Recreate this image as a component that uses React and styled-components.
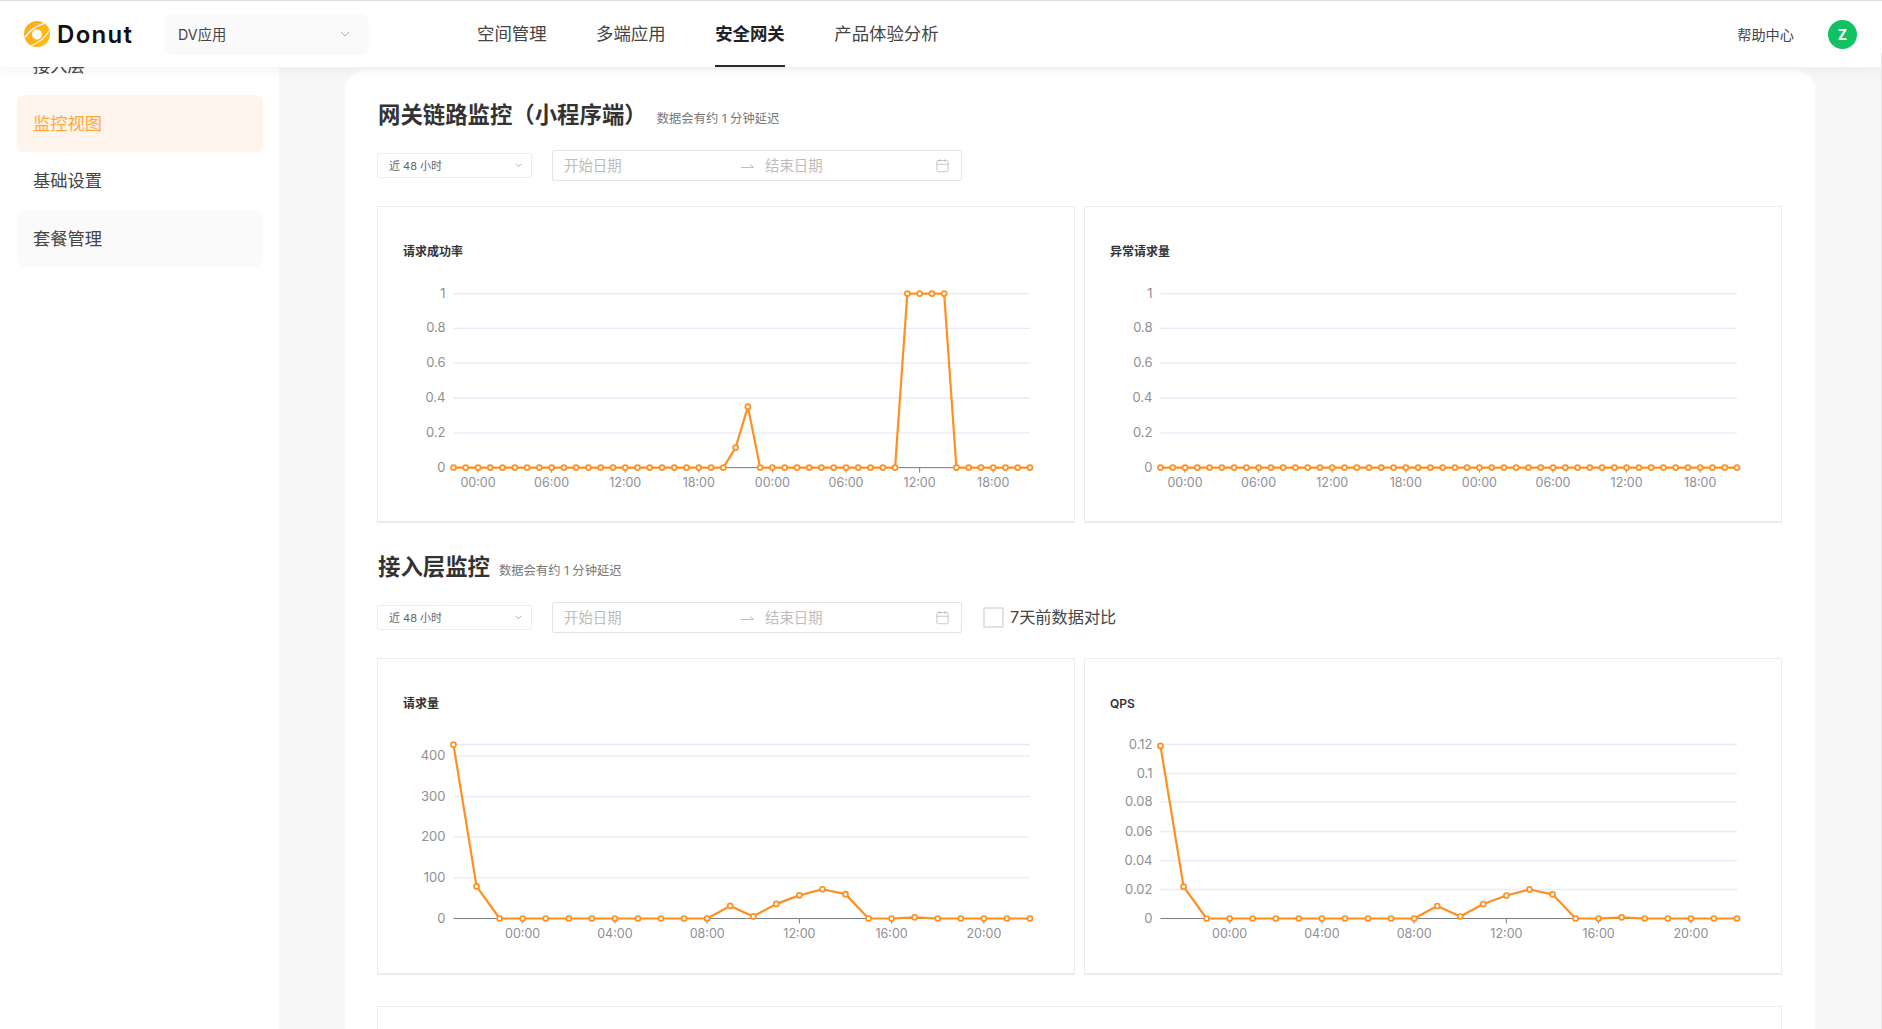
import React from "react";
import styled, { createGlobalStyle } from "styled-components";
import { ChevronDown, Calendar } from "lucide-react";

const Global = createGlobalStyle`
  html, body { margin: 0; padding: 0; height: 100%; overflow: hidden; background: #fff; }
  body { font-family: "Inter", "Noto Sans CJK SC", "Liberation Sans", sans-serif; color: #333; }
  * { box-sizing: border-box; }
`;

const Page = styled.div`
  position: relative;
  height: 100vh;
  display: flex;
  flex-direction: column;
  overflow: hidden;
`;
const ScrollEdge = styled.div`
  position: absolute;
  right: 0;
  top: 53px;
  bottom: 0;
  width: 1px;
  background: #e6e6e6;
  z-index: 5;
`;
const Header = styled.header`
  position: relative;
  z-index: 3;
  flex: none;
  height: 67px;
  display: flex;
  align-items: center;
  padding: 0 25px 0 24px;
  background: #fff;
  border-top: 1px solid #dedede;
  box-shadow: 0 3px 14px rgba(0, 0, 0, 0.05);
`;
const LogoBox = styled.div`
  width: 140px;
  display: flex;
  align-items: center;
  gap: 7px;
`;
const LogoText = styled.span`
  font-size: 24px;
  font-weight: 600;
  letter-spacing: 1.3px;
  color: #111;
`;
const AppSelect = styled.div`
  width: 205px;
  height: 41px;
  margin-right: 108px;
  padding: 0 16px 0 14px;
  display: flex;
  align-items: center;
  justify-content: space-between;
  background: #fafafa;
  border-radius: 8px;
  font-size: 14.3px;
  color: #444;
`;
const SelectLabel = styled.span`
  padding-bottom: 2px;
`;
const Nav = styled.nav`
  flex: 1;
  height: 100%;
  display: flex;
  gap: 49.5px;
`;
const NavItem = styled.div`
  position: relative;
  height: 100%;
  display: flex;
  align-items: center;
  font-size: 17.4px;
  font-weight: ${(p) => (p.$active ? 600 : 400)};
  color: ${(p) => (p.$active ? "#222" : "#444")};
  border-bottom: 2px solid ${(p) => (p.$active ? "#2a2a2a" : "transparent")};
  padding-bottom: 2px;
`;
const Help = styled.span`
  font-size: 14.2px;
  color: #444;
  margin-right: 34px;
  padding-bottom: 1px;
`;
const Avatar = styled.div`
  width: 29px;
  height: 29px;
  border-radius: 50%;
  background: #12c162;
  color: #fff;
  display: flex;
  align-items: center;
  justify-content: center;
  font-size: 14px;
  font-weight: 700;
`;
const Body = styled.div`
  flex: 1;
  min-height: 0;
  display: flex;
`;
const Sidebar = styled.aside`
  flex: none;
  width: 279px;
  padding: 0 16px 0 17px;
  background: #fff;
  overflow: hidden;
`;
const MenuList = styled.div`
  margin-top: -29.5px;
  display: flex;
  flex-direction: column;
  gap: 0.5px;
`;
const MenuItem = styled.div`
  height: 57px;
  padding: 0 0 3px 16px;
  display: flex;
  align-items: center;
  border-radius: 6px;
  font-size: 17.3px;
  color: ${(p) => (p.$active ? "#ffa83a" : "#444")};
  background: ${(p) => (p.$active ? "#fff4ec" : p.$muted ? "#fafafa" : "#fff")};
`;
const Content = styled.main`
  flex: 1;
  min-width: 0;
  padding: 3px 67px 0 66px;
  background: #f7f7f7;
  overflow: hidden;
`;
const Panel = styled.div`
  min-height: 1100px;
  padding: 31px 33px 0 32px;
  background: #fff;
  border-radius: 20px;
`;
const Section = styled.section`
  margin-bottom: 30px;
`;
const TitleRow = styled.div`
  height: 26px;
  padding-left: 1px;
  display: flex;
  align-items: center;
  gap: ${(p) => p.$gap}px;
`;
const Title = styled.h2`
  margin: 0;
  padding-top: 1px;
  font-size: 22.4px;
  line-height: 26px;
  font-weight: 600;
  color: #333;
`;
const Sub = styled.span`
  margin-top: 8px;
  font-size: 12.3px;
  color: #777;
`;
const Controls = styled.div`
  margin-top: 23px;
  height: 31px;
  display: flex;
  align-items: center;
`;
const RangeSelect = styled.div`
  width: 155px;
  height: 25px;
  margin-right: 20px;
  padding: 0 8px 0 11px;
  display: flex;
  align-items: center;
  justify-content: space-between;
  border: 1px solid #ececec;
  border-radius: 2px;
  font-size: 11px;
  color: #666;
`;
const DateRange = styled.div`
  width: 410px;
  height: 31px;
  padding: 0 11px;
  display: flex;
  align-items: center;
  border: 1px solid #e4e4e4;
  border-radius: 2px;
  font-size: 14.4px;
  color: #bdbdbd;
`;
const DateText = styled.span`
  width: ${(p) => p.$w}px;
  padding-bottom: 2px;
`;
const ArrowWrap = styled.span`
  width: 24px;
  display: flex;
`;
const Compare = styled.label`
  margin-left: 21px;
  display: flex;
  align-items: center;
  gap: 6px;
  font-size: 16.2px;
  color: #444;
`;
const CompareText = styled.span`
  padding-bottom: 3px;
`;
const Check = styled.span`
  width: 21px;
  height: 21px;
  border: 2px solid #e2e2e2;
  border-radius: 2px;
`;
const ChartGrid = styled.div`
  margin-top: 25px;
  display: grid;
  grid-template-columns: 698px 698px;
  gap: 9px;
`;
const ChartCard = styled.div`
  height: 317px;
  padding-top: 37px;
  border: 1px solid #ececec;
  border-bottom-width: 2px;
  background: #fff;
`;
const ChartTitle = styled.div`
  padding-left: 25px;
  font-size: 12px;
  line-height: 16px;
  font-weight: 600;
  color: #333;
`;
const ChartSvg = styled.svg`
  display: block;
  width: 696px;
  height: 262px;
  text {
    font-family: "Inter", "Liberation Sans", sans-serif;
    fill: #8f8f94;
  }
`;
const BottomCard = styled.div`
  height: 200px;
  margin-top: 31px;
  border: 1px solid #ececec;
`;

const Logo = () => (
  <svg width="26" height="26" viewBox="0 0 26 26">
    <defs>
      <linearGradient id="lg" x1="0" y1="0" x2="1" y2="1">
        <stop offset="0" stopColor="#ffa726" />
        <stop offset="1" stopColor="#ffbe0b" />
      </linearGradient>
    </defs>
    <circle cx="13" cy="13" r="13" fill="url(#lg)" />
    <circle cx="13" cy="13.5" r="5" fill="#fff" />
    <path d="M1 16.5C5 10 11 5.5 20 2.5" stroke="#fff" strokeWidth="1.7" fill="none" opacity=".9" />
    <path d="M7.5 24.5C14 22 20.5 18 25 10" stroke="#fff" strokeWidth="1.3" fill="none" opacity=".85" />
  </svg>
);

const HalfArrow = () => (
  <svg width="13" height="8" viewBox="0 0 13 8">
    <path d="M0 5.5H12.5L9 2.5" stroke="#bdbdbd" strokeWidth="1" fill="none" />
  </svg>
);

const Chart = ({ title, yTicks, top, y0, values, max, xLabels, xStart, xStep }) => {
  const x0 = 75.5;
  const x1 = 652;
  const dx = (x1 - x0) / (values.length - 1);
  const px = (i) => x0 + i * dx;
  const py = (v) => y0 - (v / max) * (y0 - top);
  const pts = values.map((v, i) => `${px(i).toFixed(2)},${py(v).toFixed(2)}`).join(" ");
  return (
    <ChartCard>
      <ChartTitle>{title}</ChartTitle>
      <ChartSvg viewBox="0 0 696 262">
        {yTicks.map(([label, y]) => (
          <g key={label}>
            <line x1={x0} x2={x1} y1={y} y2={y} stroke="#e6ebf8" strokeWidth="1.3" />
            <text x="67.5" y={y + 4} fontSize="13" textAnchor="end">{label}</text>
          </g>
        ))}
        {top < yTicks[0][1] && <line x1={x0} x2={x1} y1={top} y2={top} stroke="#e6ebf8" strokeWidth="1.3" />}
        <line x1={x0} x2={x1} y1={y0} y2={y0} stroke="#7d8088" strokeWidth="1" />
        {xLabels.map((l, i) => {
          const x = px(xStart + i * xStep);
          return (
            <g key={i}>
              <line x1={x} x2={x} y1={y0} y2={y0 + 5} stroke="#7d8088" strokeWidth="1" />
              <text x={x} y={y0 + 19} fontSize="12.5" textAnchor="middle">{l}</text>
            </g>
          );
        })}
        <polyline points={pts} fill="none" stroke="#ff8f1f" strokeWidth="2.2" strokeLinejoin="round" />
        {values.map((v, i) => (
          <circle key={i} cx={px(i)} cy={py(v)} r="2.5" fill="#fff" stroke="#ff8f1f" strokeWidth="1.7" />
        ))}
      </ChartSvg>
    </ChartCard>
  );
};

const rateTicks = [["1", 33.6], ["0.8", 68.4], ["0.6", 103.2], ["0.4", 138], ["0.2", 172.8], ["0", 207.6]];
const h48 = ["00:00", "06:00", "12:00", "18:00", "00:00", "06:00", "12:00", "18:00"];
const h26 = ["00:00", "04:00", "08:00", "12:00", "16:00", "20:00"];

const success = Array.from({ length: 48 }, (_, i) => {
  if (i === 23) return 0.115;
  if (i === 24) return 0.35;
  if (i >= 37 && i <= 40) return 1;
  return 0;
});
const errors = Array.from({ length: 48 }, () => 0);
const requests = [428, 79, 0, 0, 0, 0, 0, 0, 0, 0, 0, 0, 31, 5, 36, 57, 72, 60, 0, 0, 3, 0, 0, 0, 0, 0];
const qps = requests.map((v) => (v / 428) * 0.119);

const SectionHead = ({ title, gap, compare }) => (
  <>
    <TitleRow $gap={gap}>
      <Title>{title}</Title>
      <Sub>数据会有约 1 分钟延迟</Sub>
    </TitleRow>
    <Controls>
      <RangeSelect>
        <SelectLabel>近 48 小时</SelectLabel>
        <ChevronDown size={9} color="#777" strokeWidth={1.6} />
      </RangeSelect>
      <DateRange>
        <DateText $w={177}>开始日期</DateText>
        <ArrowWrap><HalfArrow /></ArrowWrap>
        <DateText $w={170}>结束日期</DateText>
        <Calendar size={15} color="#b5b5b5" strokeWidth={1.2} />
      </DateRange>
      {compare && (
        <Compare>
          <Check />
          <CompareText>7天前数据对比</CompareText>
        </Compare>
      )}
    </Controls>
  </>
);

export default function App() {
  return (
    <Page>
      <Global />
      <ScrollEdge />
      <Header>
        <LogoBox>
          <Logo />
          <LogoText>Donut</LogoText>
        </LogoBox>
        <AppSelect>
          <SelectLabel>DV应用</SelectLabel>
          <ChevronDown size={16} color="#b0b0b0" strokeWidth={1.5} />
        </AppSelect>
        <Nav>
          <NavItem>空间管理</NavItem>
          <NavItem>多端应用</NavItem>
          <NavItem $active>安全网关</NavItem>
          <NavItem>产品体验分析</NavItem>
        </Nav>
        <Help>帮助中心</Help>
        <Avatar>Z</Avatar>
      </Header>
      <Body>
        <Sidebar>
          <MenuList>
            <MenuItem>接入层</MenuItem>
            <MenuItem $active>监控视图</MenuItem>
            <MenuItem>基础设置</MenuItem>
            <MenuItem $muted>套餐管理</MenuItem>
          </MenuList>
        </Sidebar>
        <Content>
          <Panel>
            <Section>
              <SectionHead title="网关链路监控（小程序端）" gap={10} />
              <ChartGrid>
                <Chart title="请求成功率" yTicks={rateTicks} top={33.6} y0={207.6} values={success} max={1} xLabels={h48} xStart={2} xStep={6} />
                <Chart title="异常请求量" yTicks={rateTicks} top={33.6} y0={207.6} values={errors} max={1} xLabels={h48} xStart={2} xStep={6} />
              </ChartGrid>
            </Section>
            <Section>
              <SectionHead title="接入层监控" gap={9} compare />
              <ChartGrid>
                <Chart
                  title="请求量"
                  yTicks={[["400", 44.2], ["300", 84.5], ["200", 125.2], ["100", 165.9], ["0", 206.5]]}
                  top={32.5}
                  y0={206.5}
                  values={requests}
                  max={428.5}
                  xLabels={h26}
                  xStart={3}
                  xStep={4}
                />
                <Chart
                  title="QPS"
                  yTicks={[["0.12", 32.5], ["0.1", 61.5], ["0.08", 89.9], ["0.06", 119.5], ["0.04", 148.5], ["0.02", 177.5], ["0", 206.5]]}
                  top={32.5}
                  y0={206.5}
                  values={qps}
                  max={0.12}
                  xLabels={h26}
                  xStart={3}
                  xStep={4}
                />
              </ChartGrid>
            </Section>
            <BottomCard />
          </Panel>
        </Content>
      </Body>
    </Page>
  );
}
